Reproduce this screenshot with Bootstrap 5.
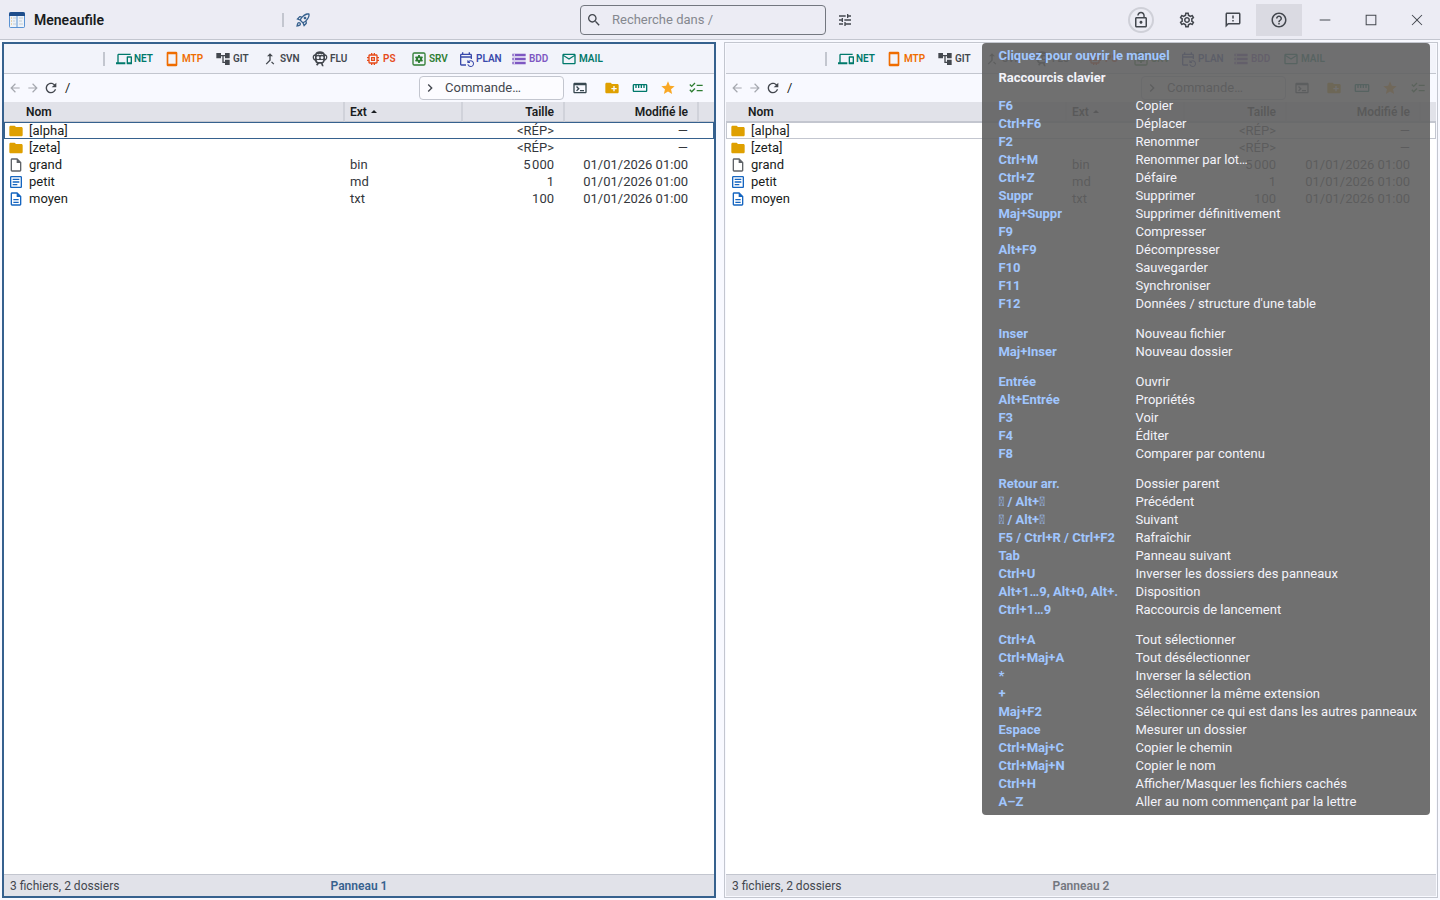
<!DOCTYPE html>
<html lang="fr">
<head>
<meta charset="utf-8">
<meta name="viewport" content="width=device-width, initial-scale=1">
<title>Meneaufile</title>
<link href="https://cdn.jsdelivr.net/npm/bootstrap@5.3.0/dist/css/bootstrap.min.css" rel="stylesheet">
<script src="https://cdn.jsdelivr.net/npm/bootstrap@5.3.0/dist/js/bootstrap.bundle.min.js"></script>
<style>
:root{--accent:#36618e;--line:#c3c6cf;--ink:#191c20;--soft:#43474e}
body{font-family:Roboto,sans-serif;font-size:13px;line-height:16px;color:var(--ink);background:#f8f9ff}
svg{display:block;fill:currentColor;flex:none}
button{border:0;padding:0;background:none;color:inherit;display:flex;align-items:center;justify-content:center;flex:none}
.i16{width:16px;height:16px}.i14{width:14px;height:14px}.i18{width:18px;height:18px}
.topbar{height:40px;background:#ececf4;border-bottom:1px solid var(--line);color:var(--soft)}
.topside{flex:1 1 0;min-width:0}
.brand{font-size:14px;font-weight:600;color:var(--ink);width:282px;padding-left:8px;gap:8px}
.vline{width:2px;height:14px;background:var(--line);flex:none}
.rocket{width:16px;margin-left:11px;color:var(--accent)}
.find{width:280px}
.search{width:246px;height:30px;border:1px solid #73777f;border-radius:4px;padding:0 8px 0 5px;gap:10px}
.search input,.cmd input{border:0;outline:0;background:none;color:var(--ink);min-width:0;padding:0;flex:1}
.search input::placeholder{color:#85888f;opacity:1}
.tune{width:18px;margin-left:10px}
.winbtn{width:46px;height:32px}
.winbtn.on{background:#dadae2}
.ring{width:26px;height:26px;border:2px solid #cfd0d8;border-radius:50%}
.thin{color:#85888f}
.panes{padding:2px;gap:8px;min-height:0}
.pane{--cur:#c3c6cf;background:#f8f9ff;border:1px solid var(--line);padding:1px;min-width:0;flex:1 1 0}
.pane.active{--cur:var(--accent);border:2px solid var(--accent);padding:0}
.tools{height:30px;background:#f2f3fa;border-bottom:1px solid var(--line);padding-left:99px;overflow:hidden}
.tools button{font-size:10px;font-weight:600;gap:2px;justify-content:flex-start}
.tools .vline{margin-right:11px}
.nav-row{height:28px;padding:0 4px 0 2px;color:var(--soft)}
.nav-row button{width:18px;height:18px}
.nav-row .dim{color:#a5a8af}
.nav-row .acts button{width:28px}
.acts button:first-child{margin-right:4px}
.path{margin-left:5px;color:var(--ink)}
.cmd{width:145px;height:24px;border:1px solid var(--line);border-radius:4px;background:#fcfcff;padding:0 4px 0 2px;gap:7px;margin-right:2px}
.cmd input::placeholder{color:var(--soft);opacity:1}
.files{table-layout:fixed;width:100%;border-collapse:separate;border-spacing:0}
.files th{height:20px;background:#e1e2e9;border-bottom:1px solid var(--line);border-right:2px solid #d0d2da;font-size:12px;font-weight:600;padding:0;line-height:16px}
.files th:last-child{border-right:0}
.files th.nom{padding-left:22px}
.files td{height:17px;padding:0;line-height:17px}
.files .num{text-align:right;padding-right:11px}
.files td.num,.files td.ext{color:#34373c}
.files th.num{padding-right:9px}
.files .ext{padding-left:5px}
.files .cur{outline:1px solid var(--cur);outline-offset:-1px}
.entry{padding-left:4px;gap:5px}
.caret{display:inline-block;border:3px solid transparent;border-top:0;border-bottom-color:var(--ink);vertical-align:3px;margin-left:1px}
.files col.c-ext{width:118px}.files col.c-size{width:102px}.files col.c-date{width:134px}.files col.c-end{width:15px}
.list{background:#fff}
.status{height:22px;background:#e1e2e9;border-top:1px solid var(--line);font-size:12px;color:var(--soft);padding:0 6px}
.pname{font-weight:600;color:#74777f}.active .pname{color:var(--accent)}
.help{position:absolute;top:43px;right:10px;background:rgba(97,97,97,.9);border-radius:4px;padding:4px 13px 4px 16px;color:#f3f3fa;line-height:18px}
.help h2{font-size:13px;line-height:18px;font-weight:700;margin:0 0 4px}
.help h2 a,.help dt{color:#a0c6ff;font-weight:700;text-decoration:none}
.help dl{display:grid;grid-template-columns:119px auto;column-gap:18px;margin:0}
.help dl+dl{margin-top:12px}.help h2+dl{margin-top:10px}
.help dt,.help dd{margin:0;white-space:nowrap}
</style>
</head>
<body>
<div class="vh-100 d-flex flex-column overflow-hidden position-relative" id="app"></div>
<script>
const P={
back:'M20 11H7.83l5.59-5.59L12 4l-8 8 8 8 1.41-1.41L7.83 13H20v-2z',
fwd:'M12 4l-1.41 1.41L16.17 11H4v2h12.17l-5.58 5.59L12 20l8-8z',
refresh:'M17.65 6.35C16.2 4.9 14.21 4 12 4c-4.42 0-7.99 3.58-7.99 8s3.57 8 7.99 8c3.73 0 6.84-2.55 7.73-6h-2.08c-.82 2.33-3.04 4-5.65 4-3.31 0-6-2.69-6-6s2.69-6 6-6c1.66 0 3.14.69 4.22 1.78L13 11h7V4l-2.35 2.35z',
search:'M15.5 14h-.79l-.28-.27C15.41 12.59 16 11.11 16 9.5 16 5.91 13.09 3 9.5 3S3 5.91 3 9.5 5.91 16 9.5 16c1.61 0 3.09-.59 4.23-1.57l.27.28v.79l5 4.99L20.49 19l-4.99-5zm-6 0C7.01 14 5 11.99 5 9.5S7.01 5 9.5 5 14 7.01 14 9.5 11.99 14 9.5 14z',
tune:'M3 17v2h6v-2H3zM3 5v2h10V5H3zm10 16v-2h8v-2h-8v-2h-2v6h2zM7 9v2H3v2h4v2h2V9H7zm14 4v-2H11v2h10zm-6-4h2V7h4V5h-4V3h-2v6z',
lock:'M12 17c1.1 0 2-.9 2-2s-.9-2-2-2-2 .9-2 2 .9 2 2 2zm6-9h-1V6c0-2.76-2.24-5-5-5S7 3.24 7 6h1.9c0-1.71 1.39-3.1 3.1-3.1 1.71 0 3.1 1.39 3.1 3.1v2H6c-1.1 0-2 .9-2 2v10c0 1.1.9 2 2 2h12c1.1 0 2-.9 2-2V10c0-1.1-.9-2-2-2zm0 12H6V10h12v10z',
gear:'M19.43 12.98c.04-.32.07-.64.07-.98 0-.34-.03-.66-.07-.98l2.11-1.65c.19-.15.24-.42.12-.64l-2-3.46c-.09-.16-.26-.25-.44-.25-.06 0-.12.01-.17.03l-2.49 1c-.52-.4-1.08-.73-1.69-.98l-.38-2.65C14.46 2.18 14.25 2 14 2h-4c-.25 0-.46.18-.49.42l-.38 2.65c-.61.25-1.17.59-1.69.98l-2.49-1c-.06-.02-.12-.03-.18-.03-.17 0-.34.09-.43.25l-2 3.46c-.13.22-.07.49.12.64l2.11 1.65c-.04.32-.07.65-.07.98 0 .33.03.66.07.98l-2.11 1.65c-.19.15-.24.42-.12.64l2 3.46c.09.16.26.25.44.25.06 0 .12-.01.17-.03l2.49-1c.52.4 1.08.73 1.69.98l.38 2.65c.03.24.24.42.49.42h4c.25 0 .46-.18.49-.42l.38-2.65c.61-.25 1.17-.59 1.69-.98l2.49 1c.06.02.12.03.18.03.17 0 .34-.09.43-.25l2-3.46c.12-.22.07-.49-.12-.64l-2.11-1.65zm-1.98-1.71c.04.31.05.52.05.73 0 .21-.02.43-.05.73l-.14 1.13.89.7 1.08.84-.7 1.21-1.27-.51-1.04-.42-.9.68c-.43.32-.84.56-1.25.73l-1.06.43-.16 1.13-.2 1.35h-1.4l-.19-1.35-.16-1.13-1.06-.43c-.43-.18-.83-.41-1.23-.71l-.91-.7-1.06.43-1.27.51-.7-1.21 1.08-.84.89-.7-.14-1.13c-.03-.31-.05-.54-.05-.74s.02-.43.05-.73l.14-1.13-.89-.7-1.08-.84.7-1.21 1.27.51 1.04.42.9-.68c.43-.32.84-.56 1.25-.73l1.06-.43.16-1.13.2-1.35h1.39l.19 1.35.16 1.13 1.06.43c.43.18.83.41 1.23.71l.91.7 1.06-.43 1.27-.51.7 1.21-1.07.85-.89.7.14 1.13zM12 8c-2.21 0-4 1.79-4 4s1.79 4 4 4 4-1.79 4-4-1.79-4-4-4zm0 6c-1.1 0-2-.9-2-2s.9-2 2-2 2 .9 2 2-.9 2-2 2z',
feedback:'M20 2H4c-1.1 0-1.99.9-1.99 2L2 22l4-4h14c1.1 0 2-.9 2-2V4c0-1.1-.9-2-2-2zm0 14H5.17l-.59.59-.58.58V4h16v12zm-9-4h2v2h-2zm0-6h2v4h-2z',
help:'M11 18h2v-2h-2v2zm1-16C6.48 2 2 6.48 2 12s4.48 10 10 10 10-4.48 10-10S17.52 2 12 2zm0 18c-4.41 0-8-3.59-8-8s3.59-8 8-8 8 3.59 8 8-3.59 8-8 8zm0-14c-2.21 0-4 1.79-4 4h2c0-1.1.9-2 2-2s2 .9 2 2c0 2-3 1.75-3 5h2c0-2.25 3-2.5 3-5 0-2.21-1.79-4-4-4z',
chev:'M10 6 8.59 7.41 13.17 12l-4.58 4.59L10 18l6-6z',
term:'M20 4H4c-1.11 0-2 .9-2 2v12c0 1.1.89 2 2 2h16c1.1 0 2-.9 2-2V6c0-1.1-.89-2-2-2zm0 14H4V8h16v10zm-2-1h-6v-2h6v2zM7.5 17l-1.41-1.41L8.67 13l-2.59-2.59L7.5 9l4 4-4 4z',
newdir:'M20 6h-8l-2-2H4c-1.11 0-1.99.89-1.99 2L2 18c0 1.11.89 2 2 2h16c1.11 0 2-.89 2-2V8c0-1.11-.89-2-2-2zm-1 8h-3v3h-2v-3h-3v-2h3V9h2v3h3v2z',
ruler:'M21 6H3c-1.1 0-2 .9-2 2v8c0 1.1.9 2 2 2h18c1.1 0 2-.9 2-2V8c0-1.1-.9-2-2-2zm0 10H3V8h2v4h2V8h2v4h2V8h2v4h2V8h2v4h2V8h2v8z',
star:'M12 17.27 18.18 21l-1.64-7.03L22 9.24l-7.19-.61L12 2 9.19 8.63 2 9.24l5.46 4.73L5.82 21z',
checks:'M22 7h-9v2h9V7zm0 8h-9v2h9v-2zM5.54 11 2 7.46l1.41-1.41 2.12 2.12 4.24-4.24 1.41 1.41L5.54 11zm0 8L2 15.46l1.41-1.41 2.12 2.12 4.24-4.24 1.41 1.41L5.54 19z',
folder:'M10 4H4c-1.1 0-1.99.9-1.99 2L2 18c0 1.1.9 2 2 2h16c1.1 0 2-.9 2-2V8c0-1.1-.9-2-2-2h-8l-2-2z',
file:'M14 2H6c-1.1 0-1.99.9-1.99 2L4 20c0 1.1.89 2 1.99 2H18c1.1 0 2-.9 2-2V8l-6-6zM6 20V4h7v5h5v11H6z',
article:'M19 5v14H5V5h14m0-2H5c-1.1 0-2 .9-2 2v14c0 1.1.9 2 2 2h14c1.1 0 2-.9 2-2V5c0-1.1-.9-2-2-2zM14 17H7v-2h7v2zm3-4H7v-2h10v2zm0-4H7V7h10v2z',
desc:'M8 16h8v2H8zm0-4h8v2H8zm6-10H6c-1.1 0-2 .9-2 2v16c0 1.1.89 2 1.99 2H18c1.1 0 2-.9 2-2V8l-6-6zm4 18H6V4h7v5h5v11z',
net:'M4 6h18V4H4c-1.1 0-2 .9-2 2v11H0v3h14v-3H4V6zm19 2h-6c-.55 0-1 .45-1 1v10c0 .55.45 1 1 1h6c.55 0 1-.45 1-1V9c0-.55-.45-1-1-1zm-1 9h-4v-7h4v7z',
phone:'M18 1H6a2 2 0 00-2 2v18a2 2 0 002 2h12a2 2 0 002-2V3a2 2 0 00-2-2zM17.500 19h-11V5h11z',
tree:'M22 11V3h-7v3H9V3H2v8h7V8h2v10h4v3h7v-8h-7v3h-2V8h2v3z',
merge:'M17 20.41 18.41 19 15 15.59 13.59 17 17 20.41zM7.5 8H11v5.59L5.59 19 7 20.41l6-6V8h3.5L12 3.5 7.5 8z',
flu:'M12 .5C8 .5 5.500 2 4.500 5 2.500 5.500 1 7 1 9.500s1.500 4.500 3.500 5c.5 2 1.500 3.300 3 4l-1.500 2L8 22l2.500-3h3l1.500 4h2.500l-1.500-4.500c1.500-.7 2.500-2 3-4 2 0 4-2.500 4-5S21.500 5.500 19.500 5C18.500 2 16 .5 12 .5zM8 4.500l2 .8 2-1.300 2 1.300 2-.8 1 1.500H7zM9 8a2.200 2.200 0 100 4.400A2.200 2.200 0 009 8zm6 0a2.200 2.200 0 100 4.400A2.200 2.200 0 0015 8zM7 13.500h10l-1.500 3h-7zM3 8l1.500-.5v4.500L3 11zm18 0-1.500-.5v4.500L21 11z',
chip:'M15 9H9v6h6V9zm-2 4h-2v-2h2v2zm8-2V9h-2V7c0-1.1-.9-2-2-2h-2V3h-2v2h-2V3H9v2H7c-1.1 0-2 .9-2 2v2H3v2h2v2H3v2h2v2c0 1.100.9 2 2 2h2v2h2v-2h2v2h2v-2h2c1.100 0 2-.9 2-2v-2h2v-2h-2v-2h2zm-4 6H7V7h10v10z',
srv:'M19 2H5a3 3 0 00-3 3v14a3 3 0 003 3h14a3 3 0 003-3V5a3 3 0 00-3-3zm1 18H4V4h16zM10.800 6h2.400l.4 1.800 1.400.8 1.700-.6 1.200 2-1.300 1.300v1.400l1.300 1.300-1.200 2-1.700-.6-1.400.8-.4 1.800h-2.400l-.4-1.800-1.400-.8-1.700.6-1.200-2 1.300-1.300v-1.400L6.100 10l1.200-2 1.700.6 1.400-.8zM12 10.500a1.500 1.500 0 100 3 1.500 1.500 0 000-3z',
plan:'M21 12V6c0-1.100-.9-2-2-2h-1V2h-2v2H8V2H6v2H5c-1.100 0-2 .9-2 2v14c0 1.100.9 2 2 2h7v-2H5V10h14v2h2zm-2-4H5V6h14v2zm-3.360 12c.43 1.450 1.770 2.500 3.360 2.500 1.930 0 3.500-1.570 3.500-3.500s-1.570-3.500-3.500-3.500c-.95 0-1.820.38-2.450 1H18V18h-4v-4h1.500v1.430c.9-.88 2.140-1.430 3.500-1.430 2.760 0 5 2.240 5 5s-2.240 5-5 5c-2.420 0-4.440-1.720-4.900-4h1.540z',
db:'M2 20h20v-4H2v4zm2-3h2v2H4v-2zM2 4v4h20V4H2zm4 3H4V5h2v2zm-4 7h20v-4H2v4zm2-3h2v2H4v-2z',
mail:'M22 6c0-1.100-.9-2-2-2H4c-1.100 0-2 .9-2 2v12c0 1.100.9 2 2 2h16c1.100 0 2-.9 2-2V6zm-2 0-8 5-8-5h16zm0 12H4V8l8 5 8-5v10z',
rocket:'M6 15c-.83 0-1.580.34-2.120.88C2.700 17.060 2 22 2 22s4.940-.7 6.120-1.880C8.660 19.580 9 18.830 9 18c0-1.660-1.340-3-3-3zm.71 3.710c-.28.28-2.170.76-2.170.76s.47-1.880.76-2.170c.17-.19.42-.3.7-.3.55 0 1 .45 1 1 0 .28-.11.53-.29.71zm10.710-5.060c6.360-6.360 4.240-11.310 4.240-11.310S16.710.22 10.350 6.580l-2.490-.5c-.65-.13-1.330.08-1.810.55L2 10.690l5 2.140L11.170 17l2.140 5 4.050-4.050c.47-.47.68-1.150.55-1.810l-.49-2.490zM7.410 10.830l-1.910-.82 1.970-1.970 1.440.29c-.57.83-1.080 1.700-1.500 2.500zm6.580 7.670-.82-1.910c.8-.42 1.670-.93 2.490-1.500l.29 1.440-1.960 1.970zM16 12.240c-1.320 1.320-3.380 2.400-4.040 2.730l-2.930-2.930c.32-.65 1.400-2.710 2.730-4.040 4.680-4.680 8.230-3.990 8.230-3.990s.69 3.550-3.990 8.230zM15 11c1.100 0 2-.9 2-2s-.9-2-2-2-2 .9-2 2 .9 2 2 2z',
min:'M4 10.800h16v2.400H4z',
max:'M4 4h16v16H4zM5.500 5.500v13h13v-13z',
close:'M20 5 19 4l-7 7-7-7-1 1 7 7-7 7 1 1 7-7 7 7 1-1-7-7z'};
const ic=(n,c='i16',col='')=>`<svg class="${c}" viewBox="0 0 24 24" fill-rule="evenodd" aria-hidden="true"${col?` color="${col}"`:''}><path d="${P[n]}"/></svg>`;
const tools=[['net','NET','#00796b',48],['phone','MTP','#ef6c00',51],['tree','GIT','#43474e',47],['merge','SVN','#43474e',50],['flu','FLU','#43474e',53],['chip','PS','#e64a19',46],['srv','SRV','#2e7d32',47],['plan','PLAN','#3949ab',53],['db','BDD','#7e57c2',50],['mail','MAIL','#00796b',50]];
const files=[['folder','#dfa000','[alpha]','','<RÉP>','—'],['folder','#dfa000','[zeta]','','<RÉP>','—'],['file','#5f6368','grand','bin','5\u202f000','01/01/2026 01:00'],['article','#1565c0','petit','md','1','01/01/2026 01:00'],['desc','#1565c0','moyen','txt','100','01/01/2026 01:00']];
const acts=[['term','#37474f','Terminal'],['newdir','#dfa000','Nouveau dossier'],['ruler','#00796b','Mesurer'],['star','#f9a825','Favoris'],['checks','#2e7d32','Sélection']];
const esc=s=>s.replace(/</g,'&lt;').replace(/>/g,'&gt;');
const pane=n=>`<section class="pane ${n==1?'active':''} d-flex flex-column">
<div class="tools d-flex align-items-center flex-shrink-0"><span class="vline"></span>${tools.map(t=>`<button style="color:${t[2]};width:${t[3]}px">${ic(t[0])}<span>${t[1]}</span></button>`).join('')}</div>
<div class="nav-row d-flex align-items-center flex-shrink-0"><button class="dim" aria-label="Précédent">${ic('back','i14')}</button><button class="dim" aria-label="Suivant">${ic('fwd','i14')}</button><button aria-label="Rafraîchir">${ic('refresh')}</button><span class="path">/</span>
<div class="cmd d-flex align-items-center ms-auto">${ic('chev')}<input aria-label="Commande" placeholder="Commande…"></div>
<div class="acts d-flex">${acts.map(a=>`<button aria-label="${a[2]}">${ic(a[0],'i16',a[1])}</button>`).join('')}</div></div>
<div class="list flex-fill"><table class="files"><colgroup><col><col class="c-ext"><col class="c-size"><col class="c-date"><col class="c-end"></colgroup>
<thead><tr><th class="nom">Nom</th><th class="ext">Ext <span class="caret"></span></th><th class="num">Taille</th><th class="num">Modifié le</th><th></th></tr></thead>
<tbody>${files.map((f,i)=>`<tr class="${i?'':'cur'}"><td><div class="entry d-flex align-items-center">${ic(f[0],'i16',f[1])}<span>${f[2]}</span></div></td><td class="ext">${f[3]}</td><td class="num">${esc(f[4])}</td><td class="num">${f[5]}</td><td></td></tr>`).join('')}</tbody></table></div>
<footer class="status d-flex align-items-center flex-shrink-0"><span class="col">3 fichiers, 2 dossiers</span><span class="pname">Panneau ${n}</span><span class="col"></span></footer></section>`;
const keys=[[['F6','Copier'],['Ctrl+F6','Déplacer'],['F2','Renommer'],['Ctrl+M','Renommer par lot…'],['Ctrl+Z','Défaire'],['Suppr','Supprimer'],['Maj+Suppr','Supprimer définitivement'],['F9','Compresser'],['Alt+F9','Décompresser'],['F10','Sauvegarder'],['F11','Synchroniser'],['F12',"Données / structure d'une table"]],
[['Inser','Nouveau fichier'],['Maj+Inser','Nouveau dossier']],
[['Entrée','Ouvrir'],['Alt+Entrée','Propriétés'],['F3','Voir'],['F4','Éditer'],['F8','Comparer par contenu']],
[['Retour arr.','Dossier parent'],['\ue7a3 / Alt+\ue7a3','Précédent'],['\ue7a3 / Alt+\ue7a3','Suivant'],['F5 / Ctrl+R / Ctrl+F2','Rafraîchir'],['Tab','Panneau suivant'],['Ctrl+U','Inverser les dossiers des panneaux'],['Alt+1…9, Alt+0, Alt+.','Disposition'],['Ctrl+1…9','Raccourcis de lancement']],
[['Ctrl+A','Tout sélectionner'],['Ctrl+Maj+A','Tout désélectionner'],['*','Inverser la sélection'],['+','Sélectionner la même extension'],['Maj+F2','Sélectionner ce qui est dans les autres panneaux'],['Espace','Mesurer un dossier'],['Ctrl+Maj+C','Copier le chemin'],['Ctrl+Maj+N','Copier le nom'],['Ctrl+H','Afficher/Masquer les fichiers cachés'],['A–Z','Aller au nom commençant par la lettre']]];
const win=(n,l,c='i18',x='')=>`<button class="winbtn ${x}" aria-label="${l}">${ic(n,c)}</button>`;
document.getElementById('app').innerHTML=`<header class="topbar d-flex align-items-center flex-shrink-0">
<div class="topside d-flex align-items-center"><div class="brand d-flex align-items-center"><svg width="18" height="18" viewBox="0 0 18 18"><rect x="1" y="1" width="16" height="16" rx="2" fill="#5b93d3"/><path d="M1 5V3a2 2 0 012-2h12a2 2 0 012 2v2z" fill="#1f4e8c"/><path d="M2 5h6.500v11H2zM9.500 5H16v11H9.500z" fill="#eef3f8"/><path d="M3 7h1M3 10h1M3 13h1" stroke="#e0b060"/><path d="M5 7h3M5 10h2M5 13h3M11 7h4M11 10h3M11 13h4" stroke="#c3ccd6"/></svg><span>Meneaufile</span></div><span class="vline"></span><button class="rocket" aria-label="Lancement">${ic('rocket')}</button></div>
<div class="find d-flex align-items-center"><div class="search d-flex align-items-center">${ic('search')}<input aria-label="Recherche" placeholder="Recherche dans /"></div><button class="tune" aria-label="Filtres">${ic('tune')}</button></div>
<div class="topside d-flex align-items-center justify-content-end"><button class="winbtn" aria-label="Verrou"><span class="ring d-flex align-items-center justify-content-center">${ic('lock','i18')}</span></button>${win('gear','Paramètres')}${win('feedback','Commentaires')}${win('help','Aide','i18','on')}${win('min','Réduire','i16','thin')}${win('max','Agrandir','i16')}${win('close','Fermer','i16')}</div></header>
<main class="d-flex flex-fill panes">${pane(1)}${pane(2)}</main>
<aside class="help" role="tooltip"><h2><a href="#">Cliquez pour ouvrir le manuel</a></h2><h2>Raccourcis clavier</h2>${keys.map(g=>`<dl>${g.map(k=>`<dt>${k[0]}</dt><dd>${k[1]}</dd>`).join('')}</dl>`).join('')}</aside>`;
</script>
</body>
</html>
